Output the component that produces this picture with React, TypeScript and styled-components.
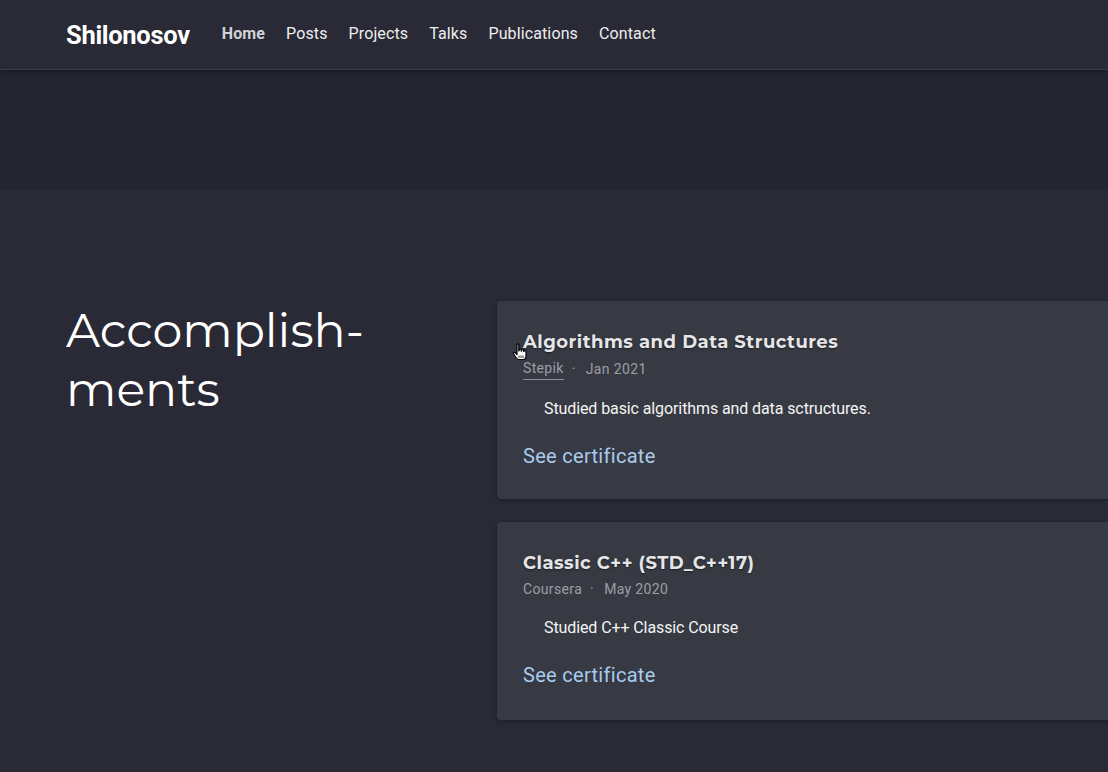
import React from "react";
import styled, { createGlobalStyle } from "styled-components";

const Global = createGlobalStyle`
  html, body { margin: 0; padding: 0; background: #292a36; overflow: hidden; }
  body { font-family: Roboto, "Liberation Sans", sans-serif; color: #f0f0f0; }
  * { box-sizing: border-box; }
`;

const Page = styled.div`
  width: 1108px;
  min-height: 772px;
  background: #292a36;
  overflow: hidden;
`;

const Header = styled.header`
  height: 70px;
  background: #292a36;
  display: flex;
  align-items: center;
  padding: 0 66px;
  gap: 32px;
  border-bottom: 1px solid #3b3c48;
  box-shadow: 0 2px 6px rgba(0, 0, 0, 0.35);
  position: relative;
  z-index: 2;
`;

const Logo = styled.div`
  font-family: Roboto, sans-serif;
  font-weight: 700;
  font-size: 25.5px;
  color: #ffffff;
  letter-spacing: -0.3px;
  margin-top: 1px;
`;

const Nav = styled.nav`
  display: flex;
  gap: 21px;
  align-items: center;
  margin-top: -2px;
`;

const NavLink = styled.a<{ $active?: boolean }>`
  font-family: Roboto, sans-serif;
  font-size: 16px;
  font-weight: ${(p) => (p.$active ? 700 : 400)};
  color: ${(p) => (p.$active ? "#d2d3d8" : "#eeeeee")};
  text-decoration: none;
  letter-spacing: 0.12px;
`;

const Hero = styled.div`
  height: 120px;
  background: #242531;
`;

const Section = styled.section`
  display: grid;
  grid-template-columns: 431px 660px;
  padding: 111px 0 0 66px;
`;

const Heading = styled.h2`
  margin: 0;
  font-family: Montserrat, "Open Sans", sans-serif;
  font-weight: 400;
  font-size: 47.5px;
  line-height: 59px;
  color: #ffffff;
  letter-spacing: 0px;
`;

const Cards = styled.div`
  display: flex;
  flex-direction: column;
  gap: 23px;
`;

const Card = styled.article`
  position: relative;
  background: #373a43;
  border-radius: 4px;
  height: 198px;
  padding: 27px 26px 0 26px;
  box-shadow: 0 1px 4px rgba(0, 0, 0, 0.35);
`;

const Title = styled.h3`
  margin: 0;
  font-family: Montserrat, "Open Sans", sans-serif;
  font-weight: 700;
  font-size: 18px;
  line-height: 28px;
  color: #e6e6e8;
  letter-spacing: 0.5px;
  text-shadow: 0 1px 2px rgba(0, 0, 0, 0.5);
`;

const Meta = styled.div`
  display: flex;
  align-items: center;
  font-size: 14px;
  line-height: 20px;
  color: #9c9ea5;
  margin-top: 2px;
  letter-spacing: 0.35px;
`;

const Org = styled.span<{ $link?: boolean }>`
  ${(p) => (p.$link ? "border-bottom: 1px solid #8d9098; padding-bottom: 1px;" : "")}
`;

const Dot = styled.span`
  margin: 0 10px 0 8px;
`;

const Desc = styled.p`
  margin: 19px 0 0 21px;
  font-size: 16px;
  line-height: 20px;
  color: #f4f4f4;
  letter-spacing: -0.1px;
`;

const CertLink = styled.a`
  display: inline-block;
  margin-top: 25px;
  font-size: 20px;
  line-height: 24px;
  color: #a9cbee;
  text-decoration: none;
  letter-spacing: 0.3px;
`;

const Cursor = styled.svg`
  position: absolute;
  left: 15px;
  top: 42px;
`;

const HandCursor = () => (
  <Cursor width="17" height="18" viewBox="0 0 17 18">
    <path
      d="M5 1.5 C5 0.7 6.8 0.7 6.8 1.5 L6.8 8 L7.5 6.5 C7.5 5.8 9.2 5.8 9.2 6.6 L9.2 8.2 L9.8 7 C10 6.4 11.6 6.4 11.6 7.3 L11.6 8.6 L12.2 8 C12.4 7.4 14 7.5 14 8.4 L14 13 C14 15 12.8 16.5 11 16.5 L7 16.5 C5.5 16.5 4.6 15.6 3.8 14.3 L1.5 10.5 C1 9.6 2.3 8.8 3.2 9.7 L5 11.5 Z"
      fill="#ffffff"
      stroke="#000000"
      strokeWidth="1.2"
      strokeLinejoin="round"
    />
    <path d="M7 12.5 L7 15 M9 12.5 L9 15 M11 12.5 L11 15" stroke="#000" strokeWidth="0.8" />
  </Cursor>
);

type Item = {
  title: string;
  org: string;
  orgLink?: boolean;
  date: string;
  desc: string;
  cursor?: boolean;
};

const items: Item[] = [
  {
    title: "Algorithms and Data Structures",
    org: "Stepik",
    orgLink: true,
    date: "Jan 2021",
    desc: "Studied basic algorithms and data sctructures.",
    cursor: true,
  },
  {
    title: "Classic C++ (STD_C++17)",
    org: "Coursera",
    date: "May 2020",
    desc: "Studied C++ Classic Course",
  },
];

export default function App() {
  return (
    <Page>
      <Global />
      <Header>
        <Logo>Shilonosov</Logo>
        <Nav>
          <NavLink $active href="#">Home</NavLink>
          <NavLink href="#">Posts</NavLink>
          <NavLink href="#">Projects</NavLink>
          <NavLink href="#">Talks</NavLink>
          <NavLink href="#">Publications</NavLink>
          <NavLink href="#">Contact</NavLink>
        </Nav>
      </Header>
      <Hero />
      <Section>
        <Heading>
          Accomplish-
          <br />
          ments
        </Heading>
        <Cards>
          {items.map((it) => (
            <Card key={it.title}>
              {it.cursor && <HandCursor />}
              <Title>{it.title}</Title>
              <Meta>
                <Org $link={it.orgLink}>{it.org}</Org>
                <Dot>·</Dot>
                <span>{it.date}</span>
              </Meta>
              <Desc>{it.desc}</Desc>
              <CertLink href="#">See certificate</CertLink>
            </Card>
          ))}
        </Cards>
      </Section>
    </Page>
  );
}
